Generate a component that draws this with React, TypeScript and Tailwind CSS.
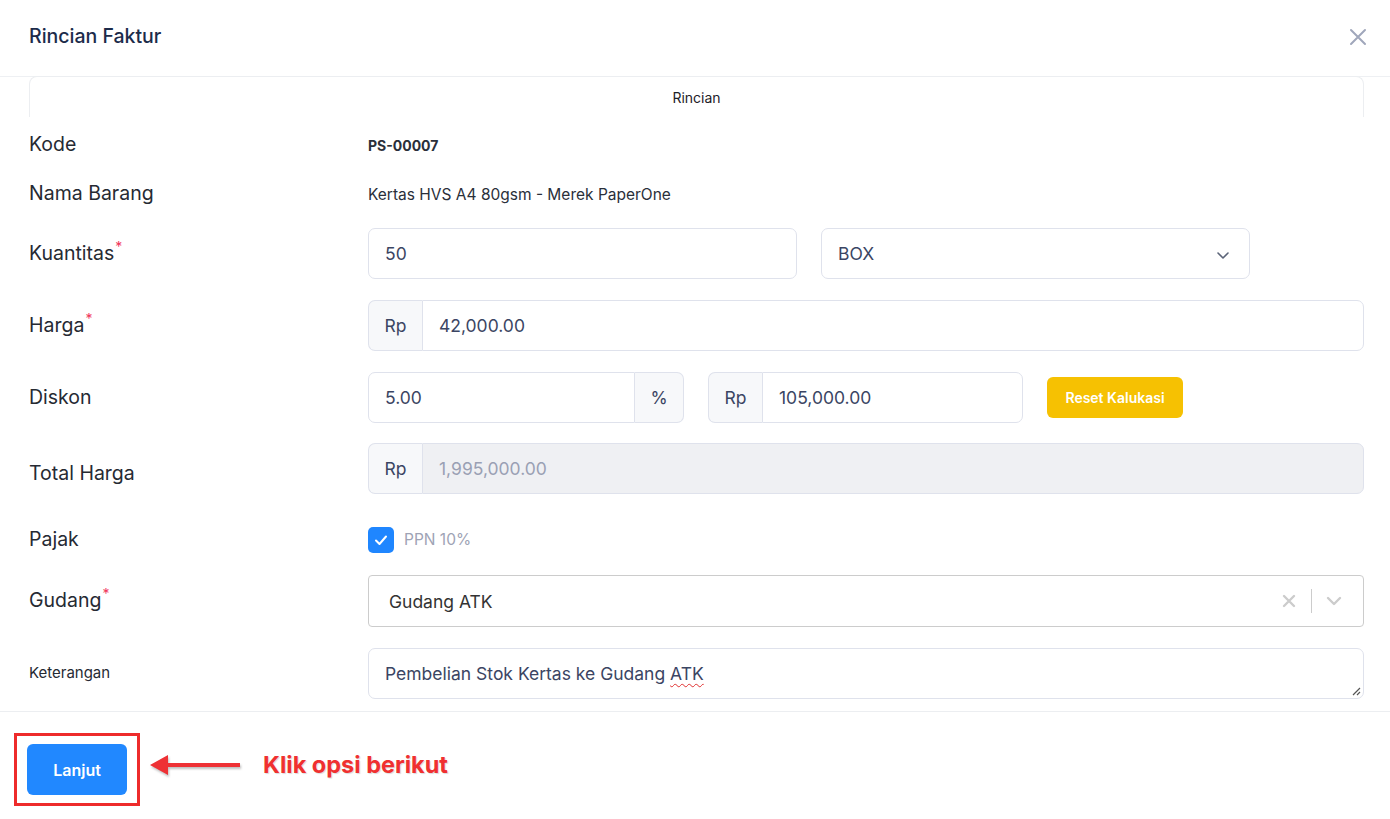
import React from "react";

const font = { fontFamily: "Inter, 'Noto Sans', sans-serif" };

function Req() {
  return <span className="text-[#f0365a] text-[14px] relative -top-[8px] ml-[1px]">*</span>;
}

function Label({ children, className = "" }: { children: React.ReactNode; className?: string }) {
  return <div className={`w-[339px] shrink-0 text-[#262a33] ${className}`}>{children}</div>;
}

function Addon({ children, className = "" }: { children: React.ReactNode; className?: string }) {
  return (
    <div className={`h-full flex items-center justify-center pt-[2px] bg-[#f7f8fa] border border-[#dfe2ec] text-[17.5px] text-[#3b4563] ${className}`}>
      {children}
    </div>
  );
}

export default function App() {
  return (
    <div style={font} className="w-[1390px] h-[819px] bg-white overflow-hidden relative">
      {/* Header */}
      <div className="h-[77px] border-b border-[#eef0f3] flex items-center justify-between pl-[29px] pr-[22px]">
        <div className="text-[19.5px] font-medium text-[#1c2b4a] -mt-[3px]">Rincian Faktur</div>
        <svg width="20" height="20" viewBox="0 0 20 20" className="-mt-[2px]">
          <path d="M3 3 L17 17 M17 3 L3 17" stroke="#a0a7bb" strokeWidth="2" strokeLinecap="round" />
        </svg>
      </div>

      <div className="pl-[29px] pr-[26px]">
        {/* Tab */}
        <div className="h-[41px] border-t border-l border-r border-[#eceef1] rounded-t-[8px] flex items-center justify-center text-[14px] text-[#1e2128] -mt-[1px]">
          Rincian
        </div>

        {/* Kode */}
        <div className="h-[56px] flex items-center">
          <Label className="text-[19.5px]">Kode</Label>
          <div className="text-[14px] font-bold text-[#2a2f3a] pt-[1px]">PS-00007</div>
        </div>

        {/* Nama Barang */}
        <div className="h-[42px] flex items-center">
          <Label className="text-[19.5px]">Nama Barang</Label>
          <div className="text-[15.5px] text-[#2a2f3a] pt-[1px]">Kertas HVS A4 80gsm - Merek PaperOne</div>
        </div>

        {/* Kuantitas */}
        <div className="mt-[13px] h-[51px] flex items-center">
          <Label className="text-[19.5px]">Kuantitas<Req /></Label>
          <div className="flex gap-[24px] h-full">
            <div className="w-[429px] h-full border border-[#dfe2ec] rounded-[7px] flex items-center pl-[16px] pt-[2px] text-[17.5px] text-[#3b4563]">50</div>
            <div className="w-[429px] h-full border border-[#dfe2ec] rounded-[7px] flex items-center justify-between pl-[16px] pr-[19px] pt-[2px] text-[17.5px] text-[#3b4563]">
              <span>BOX</span>
              <svg width="14" height="14" viewBox="0 0 14 14">
                <path d="M2 5 L7 10 L12 5" stroke="#5b6478" strokeWidth="1.6" fill="none" strokeLinecap="round" strokeLinejoin="round" />
              </svg>
            </div>
          </div>
        </div>

        {/* Harga */}
        <div className="mt-[21px] h-[51px] flex items-center">
          <Label className="text-[19.5px]">Harga<Req /></Label>
          <div className="flex flex-1 h-full">
            <Addon className="w-[54px] rounded-l-[7px] border-r-0">Rp</Addon>
            <div className="flex-1 h-full border border-[#dfe2ec] rounded-r-[7px] flex items-center pl-[16px] pt-[2px] text-[17.5px] text-[#3b4563]">42,000.00</div>
          </div>
        </div>

        {/* Diskon */}
        <div className="mt-[21px] h-[51px] flex items-center">
          <Label className="text-[19.5px]">Diskon</Label>
          <div className="flex h-full items-center">
            <div className="w-[267px] h-full border border-[#dfe2ec] rounded-l-[7px] flex items-center pl-[16px] pt-[2px] text-[17.5px] text-[#3b4563]">5.00</div>
            <Addon className="w-[49px] rounded-r-[7px] border-l-0">%</Addon>
            <Addon className="w-[54px] rounded-l-[7px] border-r-0 ml-[24px]">Rp</Addon>
            <div className="w-[261px] h-full border border-[#dfe2ec] rounded-r-[7px] flex items-center pl-[16px] pt-[2px] text-[17.5px] text-[#3b4563]">105,000.00</div>
            <button className="ml-[24px] w-[136px] h-[41px] bg-[#f6c102] rounded-[6px] text-white text-[14px] font-semibold">Reset Kalukasi</button>
          </div>
        </div>

        {/* Total Harga */}
        <div className="mt-[20px] h-[51px] flex items-center">
          <Label className="text-[19.5px] pt-[10px]">Total Harga</Label>
          <div className="flex flex-1 h-full">
            <Addon className="w-[54px] rounded-l-[7px] border-r-0">Rp</Addon>
            <div className="flex-1 h-full border border-[#dfe2ec] bg-[#eff0f3] rounded-r-[7px] flex items-center pl-[16px] pt-[2px] text-[17.5px] text-[#9aa0b4]">1,995,000.00</div>
          </div>
        </div>

        {/* Pajak */}
        <div className="mt-[21px] h-[50px] flex items-center">
          <Label className="text-[19.5px]">Pajak</Label>
          <div className="flex items-center gap-[10px]">
            <div className="w-[26px] h-[26px] rounded-[5px] bg-[#1f86ff] flex items-center justify-center">
              <svg width="16" height="16" viewBox="0 0 16 16">
                <path d="M3 8.5 L6.5 12 L13 4.5" stroke="white" strokeWidth="2" fill="none" strokeLinecap="round" strokeLinejoin="round" />
              </svg>
            </div>
            <span className="text-[15.5px] text-[#9ea3b5]">PPN 10%</span>
          </div>
        </div>

        {/* Gudang */}
        <div className="mt-[10px] h-[52px] flex items-center">
          <Label className="text-[19.5px]">Gudang<Req /></Label>
          <div className="flex-1 h-full border border-[#cccccc] rounded-[4px] flex items-center justify-between pl-[20px] text-[17.5px] text-[#333333]">
            <span className="pt-[2px]">Gudang ATK</span>
            <div className="flex items-center h-full">
              <svg width="20" height="20" viewBox="0 0 20 20" className="mr-[12px]">
                <path d="M5 5 L15 15 M15 5 L5 15" stroke="#cccccc" strokeWidth="2.4" strokeLinecap="round" />
              </svg>
              <div className="w-[1px] h-[24px] bg-[#cccccc]" />
              <svg width="20" height="20" viewBox="0 0 20 20" className="ml-[12px] mr-[19px]">
                <path d="M4 7 L10 13 L16 7" stroke="#cccccc" strokeWidth="2.4" fill="none" strokeLinecap="round" strokeLinejoin="round" />
              </svg>
            </div>
          </div>
        </div>

        {/* Keterangan */}
        <div className="mt-[21px] h-[51px] flex items-center">
          <Label className="text-[15px]">Keterangan</Label>
          <div className="flex-1 h-full border border-[#dfe2ec] rounded-[7px] relative flex items-center pl-[16px] pt-[2px] text-[17.5px] text-[#3b4563]">
            <span>
              Pembelian Stok Kertas ke Gudang{" "}
              <span className="underline decoration-wavy decoration-[#e03030] decoration-1 underline-offset-[3px]">ATK</span>
            </span>
            <svg width="10" height="10" viewBox="0 0 10 10" className="absolute right-[2px] bottom-[2px]">
              <path d="M9 2 L2 9 M9 6 L6 9" stroke="#555" strokeWidth="1.2" />
            </svg>
          </div>
        </div>
      </div>

      {/* Footer */}
      <div className="mt-[12px] border-t border-[#eceef1]" />
      <div className="flex items-center pl-[14px] pt-[21px]">
        <div className="w-[126px] h-[73px] border-[3px] border-[#ee2b2b] flex items-center justify-center">
          <button className="w-[100px] h-[51px] bg-[#2188ff] rounded-[6px] text-white text-[16px] font-semibold">Lanjut</button>
        </div>
        <svg width="100" height="24" viewBox="0 0 100 24" className="ml-[8px] mt-[-10px]" style={{ filter: "drop-shadow(1px 2px 1px rgba(0,0,0,0.25))" }}>
          <polygon points="2,12 20,2 20,10 92,10 92,14 20,14 20,22" fill="#ee3135" />
        </svg>
        <div className="ml-[15px] -mt-[10px] text-[23.5px] font-bold text-[#f03030]" style={{ textShadow: "1px 1px 1px rgba(0,0,0,0.15)" }}>
          Klik opsi berikut
        </div>
      </div>
    </div>
  );
}
